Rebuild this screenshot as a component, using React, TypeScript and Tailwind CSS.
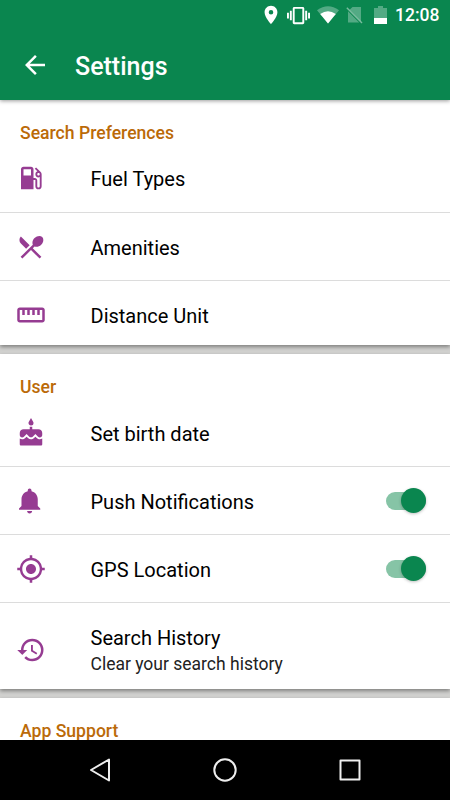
import { useState } from "react";
import type { ReactNode } from "react";
import {
  MdArrowBack,
  MdCake,
  MdGpsFixed,
  MdHistory,
  MdLocalGasStation,
  MdPlace,
  MdRestaurantMenu,
  MdStraighten,
  MdVibration,
} from "react-icons/md";

const BellIcon = () => (
  <svg viewBox="0.6 0 24 24" width="30" height="30" fill="currentColor">
    <path d="M11.5 22c1.1 0 2-.9 2-2h-4c0 1.1.9 2 2 2zm6.5-6v-5.5c0-3.07-2.13-5.64-5-6.32V3.5c0-.83-.67-1.5-1.5-1.5S10 2.67 10 3.5v.68c-2.87.68-5 3.25-5 6.32V16l-2 2v1h17v-1l-2-2z" />
  </svg>
);

function StatusBar() {
  return (
    <div className="flex h-[30px] items-center pl-[260px] text-white">
      <MdPlace size={22} />
      <MdVibration size={23} className="ml-[5px]" />
      <svg className="ml-[7px]" width="22" height="18" viewBox="0 0 22 18">
        <path d="M0 4.2Q11-3.6 22 4.2L11 17.5Z" fill="#fff" opacity=".3" />
        <path d="M3.2 8Q11 2.4 18.8 8L11 17.5Z" fill="#fff" />
      </svg>
      <svg className="ml-[7px]" width="18" height="18" viewBox="0 0 18 18">
        <path d="M6.5 1H15v14.2L3.6 3.8ZM2 5.2L13.2 16.5H2Z" fill="#fff" opacity=".3" />
        <path d="M.8 1.8L16 17" stroke="#fff" strokeWidth="1.4" opacity=".45" />
      </svg>
      <svg className="ml-[10px]" width="13" height="18" viewBox="0 0 13 18">
        <path d="M0 2h4V0h5v2h4v10H0z" fill="#fff" opacity=".3" />
        <path d="M0 12h13v6H0z" fill="#fff" />
      </svg>
      <span className="ml-[8px] pt-px text-[17.5px] font-medium">12:08</span>
    </div>
  );
}

function Toggle() {
  const [on, setOn] = useState(true);
  return (
    <button
      role="switch"
      aria-checked={on}
      onClick={() => setOn(!on)}
      className={`flex h-[18px] w-[40px] items-center rounded-full ${on ? "justify-end bg-[#86c4a6]" : "justify-start bg-gray-300"}`}
    >
      <span
        className={`size-[25px] shrink-0 rounded-full shadow-[0_1px_3px_rgba(0,0,0,0.25)] ${on ? "bg-[#0a864f]" : "bg-gray-50"}`}
      />
    </button>
  );
}

type RowProps = { icon: ReactNode; label: string; detail?: string; toggle?: boolean; className: string };

function Row({ icon, label, detail, toggle, className }: RowProps) {
  return (
    <div className={`flex items-center border-[#dcdcdc] pr-6 pl-[15.5px] ${className}`}>
      <span className="w-[75px] shrink-0 text-[#963c92]">{icon}</span>
      <div className="flex-1 pt-0.5 text-[20px] leading-[26px] text-black">
        {label}
        {detail && <p className="text-[17.5px] leading-[26px] text-[#222]">{detail}</p>}
      </div>
      {toggle && <Toggle />}
    </div>
  );
}

function Section({ title, className, children }: { title: string; className: string; children?: ReactNode }) {
  return (
    <section className={`flex shrink-0 flex-col bg-white shadow-[0_2px_4px_rgba(0,0,0,0.4)] ${className}`}>
      <h2 className="flex-1 pt-[22px] pl-5 text-[17.6px] leading-[22px] font-medium text-[#bb6a08]">{title}</h2>
      {children}
    </section>
  );
}

function NavBar() {
  return (
    <nav className="relative z-10 flex h-[60px] shrink-0 items-center justify-between bg-black px-[88px]">
      <svg width="24" height="24" viewBox="0 0 24 24" fill="none" stroke="#eee" strokeWidth="2" strokeLinejoin="round">
        <path d="M21 1.5v21L3 12z" />
      </svg>
      <svg width="24" height="24" viewBox="0 0 24 24" fill="none" stroke="#eee" strokeWidth="2">
        <circle cx="12" cy="12" r="10.7" />
      </svg>
      <svg width="24" height="24" viewBox="0 0 24 24" fill="none" stroke="#eee" strokeWidth="2" strokeLinejoin="round">
        <path d="M2.5 2.5h19v19h-19z" />
      </svg>
    </nav>
  );
}

export default function App() {
  return (
    <div className="flex h-[800px] w-[450px] flex-col overflow-hidden bg-[#d2d2d0] font-['Roboto',sans-serif]">
      <header className="relative z-10 h-[100px] shrink-0 bg-[#0a864f] text-white shadow-[0_1px_4px_rgba(0,0,0,0.4)]">
        <StatusBar />
        <div className="flex h-[70px] items-center pl-5">
          <MdArrowBack size={30} />
          <h1 className="ml-[25px] pt-[3px] text-[25px] leading-[30px] font-medium">Settings</h1>
        </div>
      </header>

      <main className="flex min-h-0 flex-1 flex-col gap-[9px] overflow-hidden">
        <Section title="Search Preferences" className="h-[245px]">
          <Row className="h-[67px] border-b pb-0.5" icon={<MdLocalGasStation size={30} />} label="Fuel Types" />
          <Row className="h-[68px] border-b" icon={<MdRestaurantMenu size={30} />} label="Amenities" />
          <Row className="h-16 pt-1" icon={<MdStraighten size={30} />} label="Distance Unit" />
        </Section>
        <Section title="User" className="h-[335px]">
          <Row className="h-[68px] border-b" icon={<MdCake size={30} />} label="Set birth date" />
          <Row className="h-[68px] border-b" icon={<BellIcon />} label="Push Notifications" toggle />
          <Row className="h-[68px] border-b" icon={<MdGpsFixed size={30} />} label="GPS Location" toggle />
          <Row className="h-[86px] pt-[7px]" icon={<MdHistory size={30} />} label="Search History" detail="Clear your search history" />
        </Section>
        <Section title="App Support" className="h-[200px]" />
      </main>
      <NavBar />
    </div>
  );
}
